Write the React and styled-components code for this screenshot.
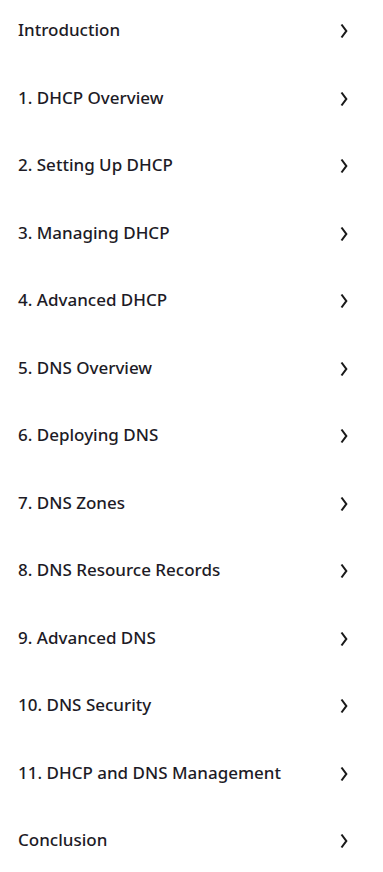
import React from "react";
import styled, { createGlobalStyle } from "styled-components";

const GlobalStyle = createGlobalStyle`
  html, body {
    margin: 0;
    padding: 0;
    background: #ffffff;
  }
  body {
    font-family: "Noto Sans", "Open Sans", "Liberation Sans", sans-serif;
    -webkit-font-smoothing: antialiased;
  }
`;

const chapters = [
  "Introduction",
  "1. DHCP Overview",
  "2. Setting Up DHCP",
  "3. Managing DHCP",
  "4. Advanced DHCP",
  "5. DNS Overview",
  "6. Deploying DNS",
  "7. DNS Zones",
  "8. DNS Resource Records",
  "9. Advanced DNS",
  "10. DNS Security",
  "11. DHCP and DNS Management",
  "Conclusion"
];

const Nav = styled.nav`
  display: flex;
  flex-direction: column;
  width: 383px;
  padding: 0 35px 0 18px;
  box-sizing: border-box;
`;

const Row = styled.a`
  display: flex;
  align-items: flex-start;
  justify-content: space-between;
  height: 67.5px;
  padding-top: 18px;
  box-sizing: border-box;
  color: #1d1b26;
  text-decoration: none;
  cursor: pointer;
`;

const Label = styled.span`
  font-size: 17px;
  font-weight: 500;
  line-height: 24px;
`;

const Chevron = styled.svg`
  width: 8px;
  height: 16px;
  margin-top: 5px;
  flex-shrink: 0;
`;

const ChevronIcon = () => (
  <Chevron viewBox="0 0 8 16" fill="none">
    <path
      d="M1.5 1.5 L6.3 8 L1.5 14.5"
      stroke="#1a1a1a"
      strokeWidth="2.1"
      strokeLinecap="butt"
      strokeLinejoin="miter"
    />
  </Chevron>
);

export default function App() {
  return (
    <>
      <GlobalStyle />
      <Nav>
        {chapters.map(title => (
          <Row key={title}>
            <Label>{title}</Label>
            <ChevronIcon />
          </Row>
        ))}
      </Nav>
    </>
  );
}
